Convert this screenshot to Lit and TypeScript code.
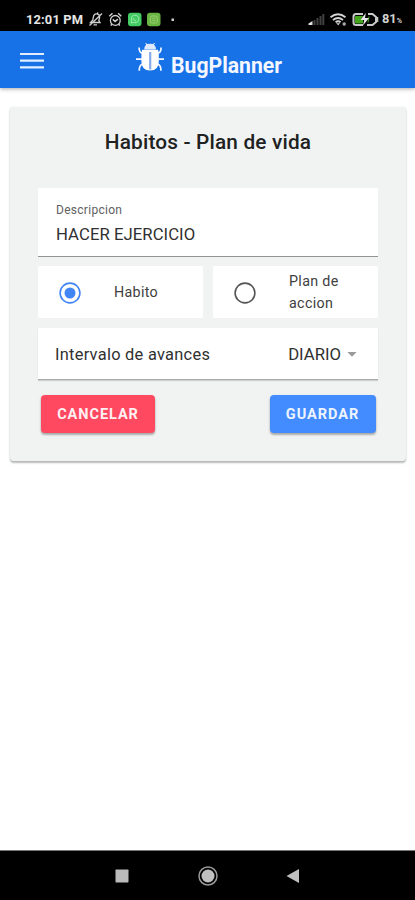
import { LitElement, html, css } from "lit";
import { customElement, state } from "lit/decorators.js";

@customElement("status-bar")
class StatusBar extends LitElement {
  static styles = css`
    :host { display: flex; align-items: center; box-sizing: border-box; height: 31px; padding: 8px 12px 0 26px; background: #000; color: #e6e6e6; }
    .time { font-weight: 700; font-size: 12.9px; letter-spacing: 0.15px; line-height: 22px; width: 62px; white-space: nowrap; }
    .icons { display: block; width: 92px; height: 23px; }
    .right { display: block; width: 72px; height: 23px; margin-left: auto; }
    .level { width: 21px; font-weight: 700; font-size: 12.8px; line-height: 22px; margin-left: 2px; display: flex; align-items: baseline; color: #d2d2d2; }
    .pct { font-size: 7px; }
  `;
  render() {
    return html`
      <span class="time">12:01 PM</span>
      <svg class="icons" viewBox="88 8 92 23" fill="none" stroke="#d0d0d0" stroke-width="1.3">
        <path d="M90.500 22.500h9.500l-1.200-1.800.8-3.200c.3-2-.8-3.300-2.500-3.600s-3.200.8-3.600 2.500l-.7 3.600zM93.500 24.800h3.500M89.500 25.500 102 13.500M97.500 13.500l.3-1.200" />
        <circle cx="115.3" cy="20.4" r="4.900" />
        <path d="m109.300 16.300 3.200-3M121.300 16.300l-3.200-3M112.800 19.400l2.300 2.200 2.800-2.500M111.900 24l-1 1.600M118.700 24l1 1.600" stroke-width="1.500" />
        <g stroke="none"><rect x="128" y="12.800" width="13.500" height="13.500" rx="3" fill="#42cc63" /><rect x="147" y="12.800" width="13.500" height="13.500" rx="3" fill="#69b544" /></g>
        <path d="m131 23 .7-2.3a3.8 3.8 0 1 1 1.6 1.6zM133.2 18.2c.3 1.4 1.3 2.4 2.7 2.600" stroke="#a0eab0" stroke-width="1" />
        <rect x="150.300" y="16" width="7" height="7" rx="2" stroke="#9dce71" stroke-width="1" />
        <path d="M152.300 18.300h3M152.300 20.500h3" stroke="#a4d27c" stroke-width=".8" />
        <rect x="171.500" y="18.500" width="2.500" height="2.500" fill="#ccc" stroke="none" />
      </svg>
      <svg class="right" viewBox="308 8 72 23" fill="none">
        <path d="M308.500 25v-1.500l4-2.500v4z" fill="#e0e0e0" />
        <path d="M314.500 25v-5M317.500 25v-7M320.500 25v-9M323.300 25V14" stroke="#404040" stroke-width="2" />
        <path d="M330.500 17.300q7.500-6 15 0M333 20q5-4 10 0M335.600 22.300q2.500-2 5 0" stroke="#d4d4d4" stroke-width="1.900" />
        <path d="m336.200 23.300 2 2 2-2z" fill="#ddd" />
        <circle cx="344.200" cy="24" r="1.700" fill="#aaa" />
        <path d="M363 14h-7q-2.500 0-2.500 2.500v6q0 2.500 2.500 2.500h7M368 14h4.500l3.500 3v5l-3.500 3H367" stroke="#c8c8c8" stroke-width="2" />
        <path d="M355.500 16.500h7l-2.500 3.500h2.500v3h-7zM369 16.500l-1 6" fill="#42a51c" stroke="#42a51c" />
        <path d="m365.800 13-5.400 7h3.800l-1.200 5.500 6-7.500h-4z" fill="#e7e7e7" />
        <path d="M377.500 17v5" stroke="#c8c8c8" stroke-width="1.600" />
      </svg>
      <span class="level">81<span class="pct">%</span></span>
    `;
  }
}

@customElement("app-header")
class AppHeader extends LitElement {
  static styles = css`
    :host { display: flex; box-sizing: border-box; height: 57px; padding-left: 20px; background: #1772e8; box-shadow: 0 1px 4px rgba(0, 0, 0, 0.34); color: #fff; position: relative; }
    .menu { width: 24px; height: 17px; margin-top: 21px; }
    .bug { width: 28px; height: 31px; margin: 11px 7px 0 92px; }
    .name { font-size: 21.2px; font-weight: 700; line-height: 26px; margin-top: 22px; color: #f4f7ff; }
  `;
  render() {
    return html`
      <svg class="menu" viewBox="0 0 24 17"><path d="M0 2h24M0 8.700h24M0 15.300h24" stroke="#e2edff" stroke-width="2.200" /></svg>
      <svg class="bug" viewBox="136 42 28 31" fill="none" stroke="#f5f8ff" stroke-width="1.700">
        <path d="M144.200 49.500q0-5.700 5.900-5.700t5.900 5.700z" fill="#dfeaff" stroke="none" />
        <path d="M146.800 45 145.800 43M153.400 45l1-2" stroke-width="1" />
        <path d="M142.200 49.800h15.800q.8 2 .8 5.500v6q0 9.300-8.700 9.300t-8.700-9.300v-6q0-3.500.8-5.500z" fill="#fff" stroke="none" />
        <path d="M142.200 53.300q-3.300-1-3-5.800M158 53.300q3.300-1 3-5.800M142 59.200h-6M158.200 59.200h6M142.500 64q-3.400 1.200-3.200 6.700M157.700 64q3.400 1.200 3.200 6.700" />
        <path d="M150.200 52v17.500" stroke="#86abe8" stroke-width="2.200" />
      </svg>
      <span class="name">BugPlanner</span>
    `;
  }
}

@customElement("habit-form")
class HabitForm extends LitElement {
  @state() kind = "habito";

  static styles = css`
    :host { display: block; box-sizing: border-box; margin: 19px 9px 0 10px; height: 354px; padding: 0 28px; background: #f1f3f3; border-radius: 4px; box-shadow: 0 1.500px 2px rgba(0, 0, 0, 0.28), 0 0 2px rgba(0, 0, 0, 0.06); color: #303030; }
    .title { margin: 0; padding-top: 23px; height: 58px; text-align: center; font-size: 20.800px; letter-spacing: 0.170px; font-weight: 500; line-height: 24px; color: #202222; white-space: nowrap; }
    .field { box-sizing: border-box; height: 69px; padding: 14px 18px 0; background: #fff; border-bottom: 1px solid #929494; }
    .label { font-size: 12px; letter-spacing: 0.280px; line-height: 16px; color: #616161; }
    .value { font-size: 16.700px; letter-spacing: 0.060px; line-height: 22px; margin-top: 6px; }
    .options { display: grid; grid-template-columns: 165px 165px; gap: 10px; margin-top: 9px; }
    .option { display: flex; align-items: center; height: 52px; background: #fff; border-radius: 2px; }
    .radio { width: 24px; height: 24px; margin: 2px 32px 0 20px; }
    .text { width: 62px; font-size: 14.300px; letter-spacing: 0.320px; line-height: 22px; color: #404040; }
    .text.single { padding-bottom: 1px; }
    .select { display: flex; align-items: center; box-sizing: border-box; height: 52px; margin-top: 10px; padding: 1px 21px 0 17px; background: #fff; border-bottom: 1px solid #a8aaaa; font-size: 16.400px; letter-spacing: 0.270px; box-shadow: 0 1px 1px rgba(0, 0, 0, 0.14); }
    .chosen { margin-left: auto; font-size: 16.700px; letter-spacing: 0; }
    .caret { width: 10px; height: 5px; margin-left: 6px; }
    .actions { display: flex; justify-content: space-between; padding: 0 2px 0 3px; margin-top: 15px; }
    .button { font: inherit; font-size: 14.500px; font-weight: 700; letter-spacing: 0.950px; border: 0; padding: 0; width: 114px; height: 38px; border-radius: 4px; color: #fff0f2; background: #ff4961; box-shadow: 0 2px 2px rgba(0, 0, 0, 0.24), 0 1px 3px rgba(0, 0, 0, 0.12); }
    .save { width: 106px; padding-right: 1px; color: #edf4ff; background: #428cff; }
  `;

  radio(kind: string) {
    const on = this.kind === kind;
    const color = on ? "#4285f4" : "#555";
    return html`<svg class="radio" viewBox="0 0 24 24" @click=${() => (this.kind = kind)}>
      <circle cx="12" cy="12" r="9.900" fill="none" stroke=${color} stroke-width="1.600" />
      <circle cx="12" cy="12" r=${on ? 5.5 : 0} fill=${color} />
    </svg>`;
  }

  render() {
    return html`
      <h1 class="title">Habitos - Plan de vida</h1>
      <div class="field"><div class="label">Descripcion</div><div class="value">HACER EJERCICIO</div></div>
      <div class="options">
        <div class="option">${this.radio("habito")}<span class="text single">Habito</span></div>
        <div class="option">${this.radio("plan")}<span class="text">Plan de accion</span></div>
      </div>
      <div class="select">
        <span>Intervalo de avances</span><span class="chosen">DIARIO</span>
        <svg class="caret" viewBox="0 0 10 5"><path d="M.500 0h9L5 4.800z" fill="#999" /></svg>
      </div>
      <div class="actions"><button class="button">CANCELAR</button><button class="button save">GUARDAR</button></div>
    `;
  }
}

@customElement("nav-bar")
class NavBar extends LitElement {
  static styles = css`
    :host { display: flex; align-items: center; box-sizing: border-box; height: 50px; padding-left: 115px; background: #000; border-top: 1px solid #777; }
    .icon { display: block; width: 20px; height: 20px; }
    .square { width: 14px; height: 14px; }
    .home { margin-left: 69px; }
    .back { width: 13px; height: 14px; margin-left: 68px; }
  `;
  render() {
    return html`
      <svg class="icon square" viewBox="0 0 14 14"><rect x=".500" y=".500" width="13" height="13" rx=".700" fill="#bbb" /></svg>
      <svg class="icon home" viewBox="0 0 20 20"><circle cx="10" cy="10" r="9" fill="none" stroke="#999" stroke-width="1.500" /><circle cx="10" cy="10" r="6.500" fill="#c0c0c0" /></svg>
      <svg class="icon back" viewBox="0 0 13 14"><path d="M.500 7 13 0v14z" fill="#c0c0c0" /></svg>
    `;
  }
}

@customElement("app-root")
class AppRoot extends LitElement {
  static styles = css`
    :host { display: flex; flex-direction: column; height: 900px; background: #fff; font-family: Roboto, "Liberation Sans", sans-serif; }
    .content { flex: 1; }
  `;
  render() {
    return html`<status-bar></status-bar><app-header></app-header><main class="content"><habit-form></habit-form></main><nav-bar></nav-bar>`;
  }
}
